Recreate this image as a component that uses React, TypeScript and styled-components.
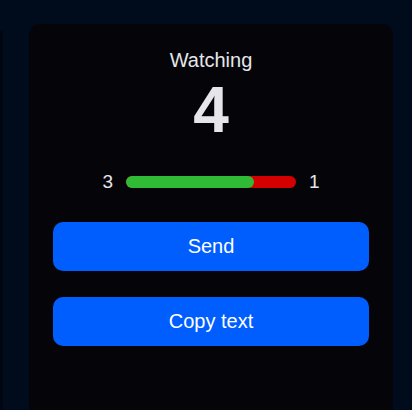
import React from 'react'
import styled, { createGlobalStyle } from 'styled-components'

const GlobalStyle = createGlobalStyle`
    html, body {
        margin: 0;
        padding: 0;
        background: #000c1c;
        font-family: 'Liberation Sans', Arial, sans-serif;
    }
`

const votes = { up: 3, down: 1 }

const App: React.FunctionComponent = () => {
    const share = (votes.up / (votes.up + votes.down)) * 100
    return (
        <>
            <GlobalStyle />
            <Page>
                <Edge />
                <Card>
                    <Label>Watching</Label>
                    <Count>4</Count>
                    <VoteRow>
                        <VoteNum>{votes.up}</VoteNum>
                        <Bar>
                            <BarFill style={{ width: `${share}%` }} />
                        </Bar>
                        <VoteNum>{votes.down}</VoteNum>
                    </VoteRow>
                    <Actions>
                        <Button>Send</Button>
                        <Button>Copy text</Button>
                    </Actions>
                </Card>
            </Page>
        </>
    )
}

const Page = styled.main`
    display: flex;
    align-items: flex-start;
    height: 410px;
    padding-top: 24px;
    box-sizing: border-box;
    overflow: hidden;
`

const Edge = styled.div`
    width: 3px;
    align-self: stretch;
    margin-top: 6px;
    background: #000713;
    margin-right: 26px;
`

const Card = styled.section`
    width: 364px;
    height: 420px;
    box-sizing: border-box;
    padding: 25px 24px;
    background: #050509;
    border-radius: 11px;
    display: flex;
    flex-direction: column;
    align-items: center;
    color: #e6e6ea;
`

const Label = styled.div`
    font-size: 20px;
    line-height: 23px;
`

const Count = styled.div`
    font-size: 64px;
    font-weight: bold;
    line-height: 72px;
    margin-top: 2px;
`

const VoteRow = styled.div`
    display: flex;
    align-items: center;
    gap: 13px;
    margin-top: 26px;
`

const VoteNum = styled.span`
    font-size: 19px;
    line-height: 20px;
`

const Bar = styled.div`
    position: relative;
    width: 170px;
    height: 12px;
    border-radius: 6px;
    background: #d40000;
`

const BarFill = styled.div`
    height: 100%;
    border-radius: 6px;
    background: #2fbb35;
`

const Actions = styled.div`
    display: flex;
    flex-direction: column;
    gap: 26px;
    width: 100%;
    margin-top: 30px;
`

const Button = styled.button`
    height: 49px;
    border: none;
    border-radius: 10px;
    background: #005eff;
    color: #ffffff;
    font-family: 'Liberation Sans', Arial, sans-serif;
    font-size: 20px;
    cursor: pointer;
`

export default App
